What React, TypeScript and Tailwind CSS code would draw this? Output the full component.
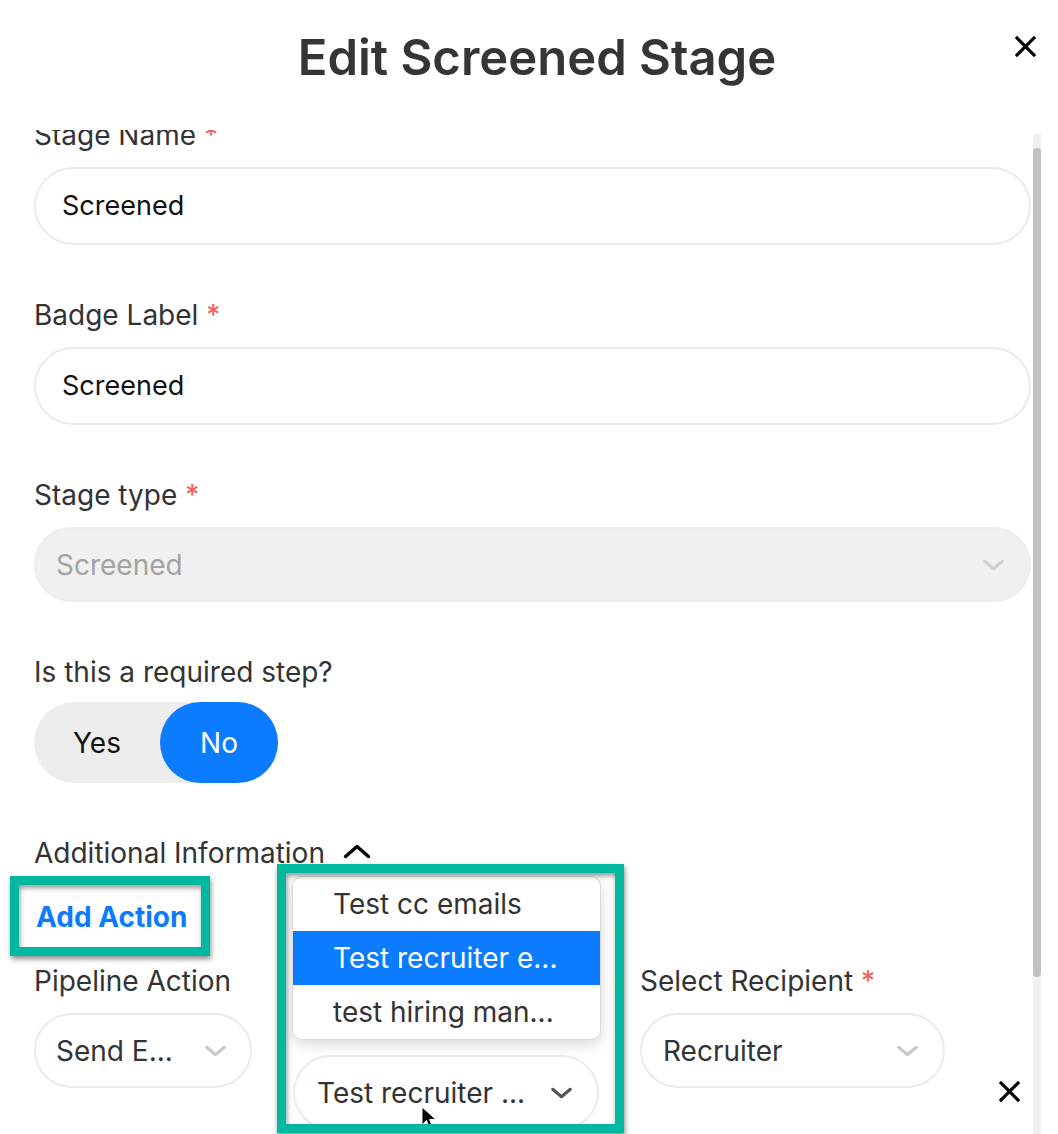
import React from "react";

type IconProps = { className?: string };

const ChevronDown = ({ className }: IconProps) => (
  <svg
    viewBox="0 0 24 13"
    className={className}
    fill="none"
    stroke="currentColor"
    strokeWidth={3.4}
    strokeLinecap="round"
    strokeLinejoin="round"
  >
    <path d="M2.5 2.5 12 10.5 21.5 2.5" />
  </svg>
);

const ChevronUp = ({ className }: IconProps) => (
  <svg
    viewBox="0 0 28 15"
    className={className}
    fill="none"
    stroke="currentColor"
    strokeWidth={3.4}
    strokeLinecap="round"
    strokeLinejoin="round"
  >
    <path d="M2.5 12.5 14 2.5 25.5 12.5" />
  </svg>
);

const CloseIcon = ({ className }: IconProps) => (
  <svg viewBox="0 0 24 24" className={className} fill="none" stroke="currentColor" strokeWidth={3.2}>
    <path d="M2 2 22 22M22 2 2 22" />
  </svg>
);

function Label({ text, required }: { text: string; required?: boolean }) {
  return (
    <div className="whitespace-nowrap text-[28px] leading-[32px] text-[#333]">
      {text}
      {required && <span className="text-[#f45b5b]"> *</span>}
    </div>
  );
}

function SelectBox({
  value,
  className,
  chevron = "text-[#c9c9c9]",
}: {
  value: string;
  className: string;
  chevron?: string;
}) {
  return (
    <div
      className={`flex h-[75px] items-center justify-between rounded-full border-2 text-[28px] ${className}`}
    >
      <span className="whitespace-nowrap">{value}</span>
      <ChevronDown className={`h-[12px] w-[23px] shrink-0 ${chevron}`} />
    </div>
  );
}

const OPTIONS = ["Test cc emails", "Test recruiter e...", "test hiring man..."];

export default function App() {
  return (
    <div className="flex h-[1134px] w-[1058px] flex-col overflow-hidden bg-white font-['Inter','Noto_Sans',sans-serif]">
      {/* Header */}
      <div className="grid h-[130px] shrink-0 grid-cols-[1fr_auto_1fr] items-start pl-[16px]">
        <div />
        <h1 className="whitespace-nowrap pt-[30px] text-[49px] font-semibold leading-[56px] text-[#353535]">
          Edit Screened Stage
        </h1>
        <div className="flex justify-end pr-[21px] pt-[35px]">
          <CloseIcon className="h-[23px] w-[23px] text-black" />
        </div>
      </div>

      {/* Scroll area */}
      <div className="flex min-h-0 flex-1">
        <div className="min-w-0 flex-1 overflow-hidden pl-[34px] pr-[2px]">
          <div className="-mt-[11px]">
            <Label text="Stage Name" required />
            <div className="mt-[16px] flex h-[78px] items-center rounded-full border-2 border-[#ebebeb] pl-[26px] text-[27px] text-[#111]">
              Screened
            </div>

            <div className="mt-[54px]">
              <Label text="Badge Label" required />
            </div>
            <div className="mt-[16px] flex h-[78px] items-center rounded-full border-2 border-[#ebebeb] pl-[26px] text-[27px] text-[#111]">
              Screened
            </div>

            <div className="mt-[54px]">
              <Label text="Stage type" required />
            </div>
            <div className="mt-[16px]">
              <SelectBox
                value="Screened"
                className="border-[#ededed] bg-[#f0f0f0] pl-[20px] pr-[24px] text-[#a3a3a3]"
                chevron="text-[#cfcfcf]"
              />
            </div>

            <div className="mt-[54px]">
              <Label text="Is this a required step?" />
            </div>
            <div className="mt-[14px] flex h-[81px] w-[244px] rounded-full bg-[#ededed] text-[28px]">
              <div className="flex w-[126px] items-center justify-center text-[#111]">Yes</div>
              <div className="flex flex-1 items-center justify-center rounded-full bg-[#0b7bff] text-white">
                No
              </div>
            </div>

            <div className="mt-[54px] flex items-center gap-[18px] text-[28px] leading-[32px] text-[#333]">
              Additional Information
              <ChevronUp className="mt-[-4px] h-[15px] w-[28px] text-black" />
            </div>

            <div className="mt-[32px] flex">
              <div className="relative ml-[2px] text-[28px] font-bold leading-[32px] text-[#0b7bff]">
                Add Action
                <div className="absolute left-[-26px] top-[-25px] h-[80px] w-[200px] border-[9px] border-[#00b89f] shadow-[1px_3px_5px_rgba(0,0,0,0.45),inset_1px_3px_5px_rgba(0,0,0,0.4)]" />
              </div>
            </div>

            {/* Action row */}
            <div className="mt-[32px] flex items-start">
              <div className="w-[218px] shrink-0">
                <Label text="Pipeline Action" />
                <div className="mt-[16px]">
                  <SelectBox value="Send E..." className="border-[#ebebeb] pl-[20px] pr-[23px] text-[#333]" />
                </div>
              </div>

              <div className="relative ml-[41px] w-[306px] shrink-0 pt-[90px]">
                <div className="relative">
                  <div className="absolute bottom-[calc(100%+15px)] left-[-1px] right-[-2px] overflow-hidden rounded-[10px] border border-[#dadada] bg-white shadow-[0_5px_14px_rgba(0,0,0,0.14)]">
                    {OPTIONS.map((o, i) => (
                      <div
                        key={o}
                        className={`flex h-[54px] items-center whitespace-nowrap pl-[40px] text-[28px] ${
                          i === 1 ? "bg-[#0b7bff] text-white" : "text-[#333]"
                        }`}
                      >
                        {o}
                      </div>
                    ))}
                  </div>
                  <SelectBox
                    value="Test recruiter ..."
                    className="border-[#ebebeb] pl-[22px] pr-[24px] text-[#333]"
                    chevron="text-[#555]"
                  />
                  {/* mouse cursor */}
                  <svg
                    viewBox="0 0 16 24"
                    className="absolute left-[128px] top-[51px] h-[24px] w-[16px]"
                  >
                    <path
                      d="M1 1 L1 19 L5.5 14.5 L9 23 L12 21.8 L8.6 13.6 L15 13.6 Z"
                      fill="#000"
                      stroke="#fff"
                      strokeWidth={1}
                    />
                  </svg>
                </div>
                <div className="absolute left-[-16px] top-[-101px] h-[269px] w-[347px] border-[9px] border-[#00b89f] shadow-[1px_3px_5px_rgba(0,0,0,0.45),inset_1px_3px_5px_rgba(0,0,0,0.4)]" />
              </div>

              <div className="ml-[41px] w-[305px] shrink-0">
                <Label text="Select Recipient" required />
                <div className="mt-[16px]">
                  <SelectBox value="Recruiter" className="border-[#ebebeb] pl-[21px] pr-[24px] text-[#333]" />
                </div>
              </div>

              <div className="ml-[53px] pt-[115px]">
                <CloseIcon className="h-[23px] w-[23px] text-black" />
              </div>
            </div>
          </div>
        </div>

        {/* Scrollbar */}
        <div className="flex w-[8px] shrink-0 flex-col pt-[4px]">
          <div className="flex-1 bg-[#f1f1f1] pt-[14px]">
            <div className="h-[829px] rounded-[4px] bg-[#c1c1c1]" />
          </div>
        </div>
        <div className="w-[17px] shrink-0" />
      </div>
    </div>
  );
}
